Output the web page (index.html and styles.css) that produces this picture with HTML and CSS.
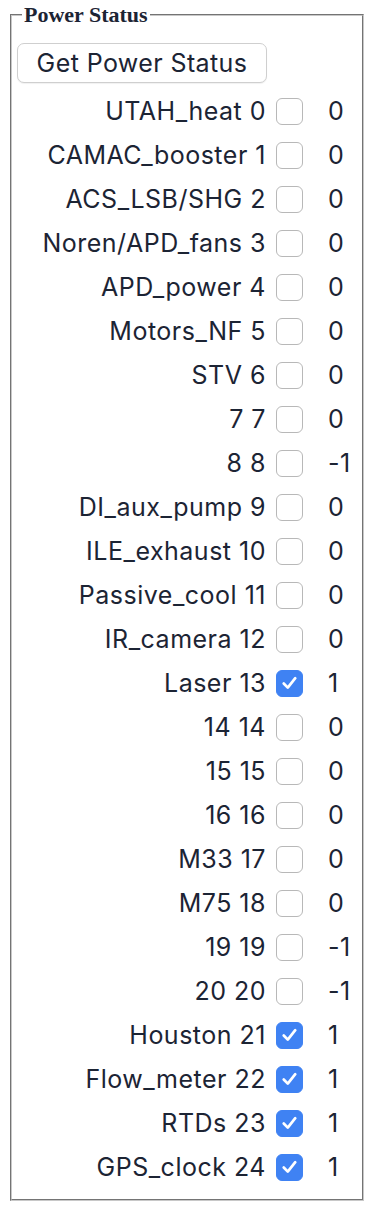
FILE: index.html
```html
<!DOCTYPE html>
<html>
<head>
<meta charset="utf-8">
<link rel="stylesheet" href="styles.css">
</head>
<body>
<fieldset class="panel">
  <legend class="panel-title">Power Status</legend>
  <button class="get-btn">Get Power Status</button>
  <div class="rows">
    <div class="row"><span class="label">UTAH_heat 0</span><span class="box"></span><span class="val">0</span></div>
    <div class="row"><span class="label">CAMAC_booster 1</span><span class="box"></span><span class="val">0</span></div>
    <div class="row"><span class="label">ACS_LSB/SHG 2</span><span class="box"></span><span class="val">0</span></div>
    <div class="row"><span class="label">Noren/APD_fans 3</span><span class="box"></span><span class="val">0</span></div>
    <div class="row"><span class="label">APD_power 4</span><span class="box"></span><span class="val">0</span></div>
    <div class="row"><span class="label">Motors_NF 5</span><span class="box"></span><span class="val">0</span></div>
    <div class="row"><span class="label">STV 6</span><span class="box"></span><span class="val">0</span></div>
    <div class="row"><span class="label">7 7</span><span class="box"></span><span class="val">0</span></div>
    <div class="row"><span class="label">8 8</span><span class="box"></span><span class="val">-1</span></div>
    <div class="row"><span class="label">DI_aux_pump 9</span><span class="box"></span><span class="val">0</span></div>
    <div class="row"><span class="label">ILE_exhaust 10</span><span class="box"></span><span class="val">0</span></div>
    <div class="row"><span class="label">Passive_cool 11</span><span class="box"></span><span class="val">0</span></div>
    <div class="row"><span class="label">IR_camera 12</span><span class="box"></span><span class="val">0</span></div>
    <div class="row"><span class="label">Laser 13</span><span class="box checked"><svg viewBox="0 0 26 26" width="26" height="26"><path d="M7 13.5 L11.2 17.8 L19 8" fill="none" stroke="#fff" stroke-width="2.8" stroke-linecap="round" stroke-linejoin="round"/></svg></span><span class="val">1</span></div>
    <div class="row"><span class="label">14 14</span><span class="box"></span><span class="val">0</span></div>
    <div class="row"><span class="label">15 15</span><span class="box"></span><span class="val">0</span></div>
    <div class="row"><span class="label">16 16</span><span class="box"></span><span class="val">0</span></div>
    <div class="row"><span class="label">M33 17</span><span class="box"></span><span class="val">0</span></div>
    <div class="row"><span class="label">M75 18</span><span class="box"></span><span class="val">0</span></div>
    <div class="row"><span class="label">19 19</span><span class="box"></span><span class="val">-1</span></div>
    <div class="row"><span class="label">20 20</span><span class="box"></span><span class="val">-1</span></div>
    <div class="row"><span class="label">Houston 21</span><span class="box checked"><svg viewBox="0 0 26 26" width="26" height="26"><path d="M7 13.5 L11.2 17.8 L19 8" fill="none" stroke="#fff" stroke-width="2.8" stroke-linecap="round" stroke-linejoin="round"/></svg></span><span class="val">1</span></div>
    <div class="row"><span class="label">Flow_meter 22</span><span class="box checked"><svg viewBox="0 0 26 26" width="26" height="26"><path d="M7 13.5 L11.2 17.8 L19 8" fill="none" stroke="#fff" stroke-width="2.8" stroke-linecap="round" stroke-linejoin="round"/></svg></span><span class="val">1</span></div>
    <div class="row"><span class="label">RTDs 23</span><span class="box checked"><svg viewBox="0 0 26 26" width="26" height="26"><path d="M7 13.5 L11.2 17.8 L19 8" fill="none" stroke="#fff" stroke-width="2.8" stroke-linecap="round" stroke-linejoin="round"/></svg></span><span class="val">1</span></div>
    <div class="row"><span class="label">GPS_clock 24</span><span class="box checked"><svg viewBox="0 0 26 26" width="26" height="26"><path d="M7 13.5 L11.2 17.8 L19 8" fill="none" stroke="#fff" stroke-width="2.8" stroke-linecap="round" stroke-linejoin="round"/></svg></span><span class="val">1</span></div>
  </div>
</fieldset>
</body>
</html>
```
FILE: styles.css
```css
html, body {
  margin: 0;
  padding: 0;
  background: #fff;
}
body {
  padding: 4px 0 0 10px;
  color: #1c2434;
  font-family: Inter, "Liberation Sans", sans-serif;
}
.panel {
  box-sizing: border-box;
  width: 354px;
  margin: 0;
  padding: 17px 5px 10px 5px;
  border: 2px groove #c8c8c8;
}
.panel-title {
  font-family: "Liberation Serif", serif;
  font-weight: bold;
  font-size: 22px;
  padding: 0 2px;
  margin-left: 5px;
  color: #1c2434;
  line-height: 22px;
}
.get-btn {
  display: block;
  box-sizing: border-box;
  width: 250px;
  height: 40px;
  margin: 0;
  padding: 0;
  border: 1px solid #cfcfcf;
  border-radius: 7px;
  background: #fff;
  font-family: Inter, "Liberation Sans", sans-serif;
  font-size: 25px;
  letter-spacing: 0.4px;
  color: #1c2434;
  box-shadow: 0 1px 1px rgba(0,0,0,0.06);
}
.rows {
  margin-top: 6px;
  display: flex;
  flex-direction: column;
}
.row {
  display: grid;
  grid-template-columns: 248px 27px auto;
  column-gap: 11px;
  align-items: center;
  height: 44px;
  font-size: 25px;
  letter-spacing: 0.5px;
}
.row .val {
  margin-left: 14px;
}
.label {
  text-align: right;
  white-space: nowrap;
  margin-right: -1px;
}
.box {
  box-sizing: border-box;
  width: 27px;
  height: 27px;
  border: 1px solid #b8b8b8;
  border-radius: 6px;
  background: #fff;
  display: flex;
  align-items: center;
  justify-content: center;
}
.box.checked {
  border-color: #3f82f3;
  background: #3f82f3;
}
.box svg {
  display: block;
}
```
